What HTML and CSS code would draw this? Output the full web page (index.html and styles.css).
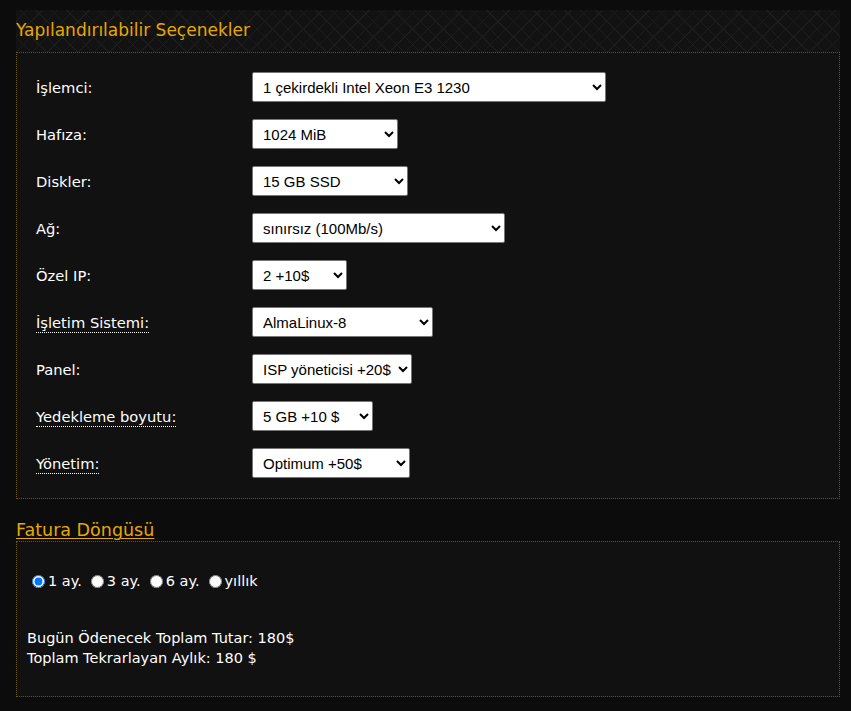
FILE: index.html
```html
<!DOCTYPE html>
<html lang="tr">
<head>
<meta charset="utf-8">
<title>Yapılandırılabilir Seçenekler</title>
<link rel="stylesheet" href="styles.css">
</head>
<body>
<div class="page">
  <div class="section-head pattern">
    <h2 class="title">Yapılandırılabilir Seçenekler</h2>
  </div>
  <div class="box options">
    <div class="row"><span class="label">İşlemci:</span><select class="sel w354"><option>1 çekirdekli Intel Xeon E3 1230</option></select></div>
    <div class="row"><span class="label">Hafıza:</span><select class="sel w146"><option>1024 MiB</option></select></div>
    <div class="row"><span class="label">Diskler:</span><select class="sel w156"><option>15 GB SSD</option></select></div>
    <div class="row"><span class="label">Ağ:</span><select class="sel w253"><option>sınırsız (100Mb/s)</option></select></div>
    <div class="row"><span class="label">Özel IP:</span><select class="sel w95"><option>2 +10$</option></select></div>
    <div class="row"><span class="label"><span class="dotted">İşletim Sistemi:</span></span><select class="sel w181"><option>AlmaLinux-8</option></select></div>
    <div class="row"><span class="label">Panel:</span><select class="sel w160"><option>ISP yöneticisi +20$</option></select></div>
    <div class="row"><span class="label"><span class="dotted">Yedekleme boyutu:</span></span><select class="sel w121"><option>5 GB +10 $</option></select></div>
    <div class="row"><span class="label"><span class="dotted">Yönetim:</span></span><select class="sel w158"><option>Optimum +50$</option></select></div>
  </div>
  <div class="section-head plain">
    <h2 class="title underline">Fatura Döngüsü</h2>
  </div>
  <div class="box billing">
    <div class="radios">
      <label class="radio"><input type="radio" name="cycle" checked>1 ay.</label>
      <label class="radio"><input type="radio" name="cycle">3 ay.</label>
      <label class="radio"><input type="radio" name="cycle">6 ay.</label>
      <label class="radio"><input type="radio" name="cycle">yıllık</label>
    </div>
    <div class="totals">
      <div>Bugün Ödenecek Toplam Tutar: 180$</div>
      <div>Toplam Tekrarlayan Aylık: 180 $</div>
    </div>
  </div>
</div>
</body>
</html>
```

FILE: styles.css
```css
html, body {
  margin: 0;
  padding: 0;
  background: #0c0c0c;
}
body {
  font-family: "DejaVu Sans", "Noto Sans", sans-serif;
  color: #ffffff;
  width: 851px;
  height: 711px;
  overflow: hidden;
}
.page {
  padding: 10px 11px 0 16px;
}
.section-head {
  height: 42px;
  display: flex;
  align-items: center;
}
.pattern {
  background-color: #121212;
  background-image:
    repeating-linear-gradient(45deg, transparent 0 10px, #1c1c1c 10px 11px),
    repeating-linear-gradient(-45deg, transparent 0 10px, #1c1c1c 10px 11px);
}
.plain {
  height: auto;
  margin-top: 20px;
}
.title {
  margin: 0;
  font-size: 17px;
  font-weight: normal;
  color: #e6a800;
  position: relative;
  top: -1px;
}
.underline {
  font-size: 17.5px;
  text-decoration: underline;
  text-decoration-thickness: 1px;
  text-underline-offset: 2px;
  line-height: 22px;
  top: 0;
}
.box {
  background: #111111;
  border: 1px dotted #6b5514;
}
.options {
  padding: 19px 0 20px 19px;
  display: flex;
  flex-direction: column;
  gap: 17px;
}
.row {
  display: flex;
  align-items: center;
  height: 30px;
}
.label {
  width: 216px;
  font-size: 14.7px;
  color: #ffffff;
}
.dotted {
  border-bottom: 1px dotted #ffffff;
  padding-bottom: 1px;
}
.sel {
  height: 30px;
  font-family: "Liberation Sans", Arial, sans-serif;
  font-size: 15px;
  color: #000;
  background: #ffffff;
  border: 1px solid #767676;
  border-radius: 2px;
  padding: 0 0 0 6px;
}
.w354 { width: 354px; }
.w146 { width: 146px; }
.w156 { width: 156px; }
.w253 { width: 253px; }
.w95 { width: 95px; }
.w181 { width: 181px; }
.w160 { width: 160px; }
.w121 { width: 121px; }
.w158 { width: 158px; }
.billing {
  margin-top: 0;
  height: 154px;
  padding: 0 10px;
}
.radios {
  margin-top: 31px;
  display: flex;
  align-items: center;
  font-size: 14.5px;
}
.radio {
  display: flex;
  align-items: center;
  margin-right: 4px;
}
.radio input {
  margin: 0 3px 0 5px;
  width: 13px;
  height: 13px;
}
.totals {
  margin-top: 39px;
  font-size: 14.5px;
  line-height: 20px;
}
```
